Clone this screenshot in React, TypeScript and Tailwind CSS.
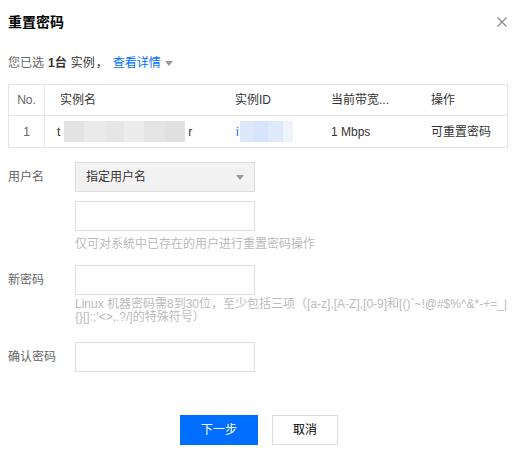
import React from "react";

const font = { fontFamily: '"Liberation Sans", "Noto Sans CJK SC", sans-serif' };

function Input() {
  return <div className="h-[30px] w-[180px] border border-[#dddddd] bg-white" />;
}

export default function App() {
  return (
    <div className="w-[516px] h-[458px] bg-white text-[12px] text-[#333333] px-2 relative" style={font}>
      {/* header */}
      <div className="flex items-center justify-between h-[44px]">
        <div className="text-[14px] font-bold text-[#000000] leading-none">重置密码</div>
        <svg width="10" height="10" viewBox="0 0 10 10" className="mr-[1px]">
          <path d="M0.5 0.5 L9.5 9.5 M9.5 0.5 L0.5 9.5" stroke="#888888" strokeWidth="1.2" />
        </svg>
      </div>
      {/* selected */}
      <div className="flex items-center h-[38px] text-[#666666]">
        <span>您已选</span>
        <span className="ml-[4px] font-bold text-[#333333]">1台</span>
        <span className="ml-[4px] text-[#333333]">实例</span>
        <span className="ml-[1px] text-[#333333]">，</span>
        <span className="ml-[5px] text-[#006eff]">查看详情</span>
        <svg width="8" height="5" viewBox="0 0 8 5" className="ml-[4px]">
          <path d="M0 0 L8 0 L4 5 Z" fill="#999999" />
        </svg>
      </div>
      {/* table */}
      <div className="mt-[2px] border border-[#e5e5e5]">
        <div className="flex h-[31px] items-center border-b border-[#e5e5e5]">
          <div className="w-[36px] h-full flex items-center justify-center border-r border-[#e5e5e5] text-[#666666]">No.</div>
          <div className="w-[190px] pl-[15px] text-[#333333]">实例名</div>
          <div className="w-[96px] text-[#333333]">实例ID</div>
          <div className="w-[100px] text-[#333333]">当前带宽...</div>
          <div className="text-[#333333]">操作</div>
        </div>
        <div className="flex h-[31px] items-center">
          <div className="w-[36px] h-full flex items-center justify-center border-r border-[#e5e5e5] text-[#666666]">1</div>
          <div className="w-[190px] pl-[12px] flex items-center">
            <span>t</span>
            <div className="ml-[4px] h-[21px] w-[121px] flex">
              <div className="w-[20px] bg-[#e3e3e3]" />
              <div className="w-[22px] bg-[#eaeaea]" />
              <div className="w-[18px] bg-[#e6e6e6]" />
              <div className="w-[20px] bg-[#ececec]" />
              <div className="w-[21px] bg-[#e4e4e4]" />
              <div className="w-[20px] bg-[#e0e0e0]" />
            </div>
            <span className="ml-[3px]">r</span>
          </div>
          <div className="w-[96px] flex items-center text-[#006eff]">
            <span className="ml-[1px]">i</span>
            <div className="ml-[1px] h-[21px] flex">
              <div className="w-[14px] bg-[#dde8fb]" />
              <div className="w-[14px] bg-[#d6e4fd]" />
              <div className="w-[15px] bg-[#dfe9fc]" />
              <div className="w-[10px] bg-[#eef3fc]" />
            </div>
          </div>
          <div className="w-[100px]">1 Mbps</div>
          <div>可重置密码</div>
        </div>
      </div>
      {/* form */}
      <div className="mt-[14px] flex flex-col">
        <div className="flex items-center">
          <div className="w-[67px] shrink-0 text-[#666666]">用户名</div>
          <div className="h-[30px] w-[180px] border border-[#dddddd] bg-[#f2f2f2] flex items-center justify-between pl-[10px] pr-[10px]">
            <span className="text-[#333333]">指定用户名</span>
            <svg width="8" height="5" viewBox="0 0 8 5">
              <path d="M0 0 L8 0 L4 5 Z" fill="#999999" />
            </svg>
          </div>
        </div>
        <div className="flex mt-[9px]">
          <div className="w-[67px] shrink-0" />
          <div className="flex flex-col">
            <Input />
            <div className="mt-[6px] text-[#bbbbbb] leading-[14px]">仅可对系统中已存在的用户进行重置密码操作</div>
          </div>
        </div>
        <div className="flex mt-[14px]">
          <div className="w-[67px] shrink-0 h-[30px] flex items-center text-[#666666]">新密码</div>
          <div className="flex flex-col min-w-0">
            <Input />
            <div className="mt-[3px] whitespace-nowrap text-[#bbbbbb] leading-[13px]">
              Linux 机器密码需8到30位，至少包括三项（[a-z],[A-Z],[0-9]和[()`~!@#$%^&amp;*-+=_|
              <br />
              {"{}[]:;'<>,.?/]的特殊符号）"}
            </div>
          </div>
        </div>
        <div className="flex mt-[18px]">
          <div className="w-[67px] shrink-0 h-[30px] flex items-center text-[#666666]">确认密码</div>
          <Input />
        </div>
      </div>
      {/* buttons */}
      <div className="mt-[43px] flex justify-center gap-[14px] pl-[2px]">
        <button className="w-[78px] h-[30px] bg-[#006eff] text-white text-[12px]">下一步</button>
        <button className="w-[66px] h-[30px] border border-[#dddddd] bg-white text-[#000000] text-[12px]">取消</button>
      </div>
    </div>
  );
}
